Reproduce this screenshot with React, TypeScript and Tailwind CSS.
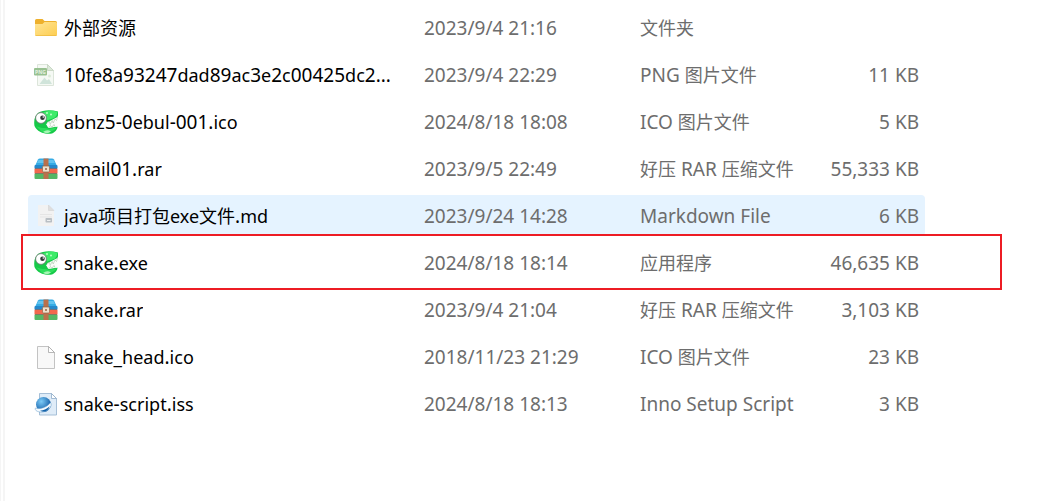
import React from 'react';

type FileKind = 'folder' | 'png' | 'snake' | 'rar' | 'markdown' | 'blank' | 'script';

interface FileEntry {
    name: string;
    modified: string;
    type: string;
    size: string;
    kind: FileKind;
    hovered?: boolean;
    marked?: boolean;
}

const FILES: FileEntry[] = [
    { name: '外部资源', modified: '2023/9/4 21:16', type: '文件夹', size: '', kind: 'folder' },
    { name: '10fe8a93247dad89ac3e2c00425dc2...', modified: '2023/9/4 22:29', type: 'PNG 图片文件', size: '11 KB', kind: 'png' },
    { name: 'abnz5-0ebul-001.ico', modified: '2024/8/18 18:08', type: 'ICO 图片文件', size: '5 KB', kind: 'snake' },
    { name: 'email01.rar', modified: '2023/9/5 22:49', type: '好压 RAR 压缩文件', size: '55,333 KB', kind: 'rar' },
    { name: 'java项目打包exe文件.md', modified: '2023/9/24 14:28', type: 'Markdown File', size: '6 KB', kind: 'markdown', hovered: true },
    { name: 'snake.exe', modified: '2024/8/18 18:14', type: '应用程序', size: '46,635 KB', kind: 'snake', marked: true },
    { name: 'snake.rar', modified: '2023/9/4 21:04', type: '好压 RAR 压缩文件', size: '3,103 KB', kind: 'rar' },
    { name: 'snake_head.ico', modified: '2018/11/23 21:29', type: 'ICO 图片文件', size: '23 KB', kind: 'blank' },
    { name: 'snake-script.iss', modified: '2024/8/18 18:13', type: 'Inno Setup Script', size: '3 KB', kind: 'script' },
];

const FolderIcon = () => (
    <>
        <defs>
            <linearGradient id="folder" x1="0" y1="0" x2="1" y2="1">
                <stop offset="0" stopColor="#ffe596" />
                <stop offset="1" stopColor="#fdcd50" />
            </linearGradient>
        </defs>
        <path d="M1 4.500Q1 3 2.500 3H8.500L10.500 5H21.500Q23 5 23 6.500V9H1Z" fill="#eeb02c" />
        <path d="M1 8H8.500L10.500 6H21.500Q23 6 23 7.500V18.500Q23 20 21.500 20H2.500Q1 20 1 18.500Z" fill="url(#folder)" />
        <path d="M1.500 19.500H22.500" stroke="#ecb93d" strokeWidth=".7" />
    </>
);

const PngIcon = () => (
    <>
        <path d="M3.500 1.500H13.500L19.500 7.500V22.500H3.500Z" fill="#f5f9f4" stroke="#dce5da" />
        <path d="M13.500 1.500V7.500H19.500Z" fill="#dce9d9" stroke="#c3d3bf" strokeWidth=".8" />
        <path d="M5.500 21L10.500 14.500L13 17.500L15 16L18 21Z" fill="#d0e4da" />
        <circle cx="15.500" cy="13" r="1.500" fill="#dcebd9" />
        <rect x="0" y="5" width="13" height="7.500" rx="1" fill="#98c191" />
        <text x="6.500" y="10.700" textAnchor="middle" fontSize="5" fontWeight="700" fill="#e5f2e1">PNG</text>
    </>
);

const SnakeIcon = () => (
    <>
        <path d="M4 3C9-.5 17-.5 24 1.500C24.500 5 24 7 22 9L12 14L14 17.500L23.500 16.500C23.500 20 21 22 18 23.500C11 24.700 3 22 .5 16C-.5 10 1 6 4 3Z" fill="#16c948" />
        <path d="M9 2.500C14 .2 19 .2 23.500 2C23 5 22 7 20 8L13 10.500Z" fill="#3deb69" />
        <path d="M2 16C6 18.500 12 17.500 15 19L22.500 17.500C20 21.500 13 24 7.500 21.500Z" fill="#2dde5b" />
        <path d="M13 12.500L23.500 7V16.500L14.500 18Z" fill="#fbfdfa" />
        <path d="M13 12.500L15.500 11.500L16.200 14.500L18.200 10.500L19.200 13L21 9L22.500 10.500L23.500 7M15 17.500L16.500 15.500L18 17.200L20 14.500L21 16.500" fill="none" stroke="#a7c4a7" strokeWidth=".6" />
        <path d="M9 22Q13 19 17 21.500Q13 24.500 9 22Z" fill="#a5f5b4" />
        <circle cx="7" cy="8" r="5.400" fill="#fff" stroke="#65756b" strokeWidth=".8" />
        <circle cx="8.500" cy="7.800" r="2.300" fill="#303a38" />
        <circle cx="9.300" cy="7" r=".8" fill="#fff" />
        <circle cx="13" cy="3" r="1" fill="#b9ffc5" />
        <circle cx="17" cy="4.500" r="1" fill="#b9ffc5" />
    </>
);

const RarIcon = () => (
    <>
        <path d="M1 9L4 2.500Q4.500 1.500 6 1.500H18Q19.500 1.500 20 2.500L23 9Z" fill="#35abe5" />
        <path d="M3 6L4.500 3H19.500L21 6Z" fill="#62c4f0" />
        <rect x="0.500" y="8" width="23" height="4" rx="1" fill="#2588ca" />
        <rect x="0.500" y="11.500" width="23" height="5.500" rx="1" fill="#f2684d" />
        <rect x="0.500" y="16.500" width="23" height="5.500" rx="1" fill="#54b765" />
        <path d="M1 16.500H23M1 11.500H23" stroke="#536b70" strokeWidth=".5" />
        <rect x="9.500" y="1.500" width="5" height="20.500" fill="#b9714c" />
        <rect x="8.500" y="9" width="7" height="6" rx="1" fill="#eee0cd" stroke="#91684b" strokeWidth=".7" />
        <path d="M11 11H13V13H11Z" fill="#ac8067" />
    </>
);

const MarkdownIcon = () => (
    <>
        <path d="M4 1H14.500L20 6.500V22H4Z" fill="#f2f2f2" />
        <path d="M14.500 1V6.500H20Z" fill="#dedede" stroke="#cfcfcf" strokeWidth=".5" />
        <path d="M6 10.500H18M6 13H18" stroke="#e5e5e5" />
        <rect x="11.500" y="14" width="6.500" height="4.500" rx=".7" fill="#b9bfc4" />
        <path d="M13 16.500H16.500" stroke="#eef0f1" />
    </>
);

const BlankIcon = () => (
    <>
        <path d="M3.500 1.500H14.500L20.500 7.500V23.500H3.500Z" fill="#f8f8f8" stroke="#b5b5b5" strokeWidth=".8" />
        <path d="M14.500 1.500V7.500H20.500Z" fill="#fff" stroke="#a5a5a5" strokeWidth=".8" />
    </>
);

const ScriptIcon = () => (
    <>
        <defs>
            <radialGradient id="globe" cx=".35" cy=".3" r=".75">
                <stop offset="0" stopColor="#7ccbf7" />
                <stop offset="1" stopColor="#07519e" />
            </radialGradient>
        </defs>
        <path d="M5.500 1.500H17.500L22.500 6.500V23H5.500Z" fill="#dfecf8" stroke="#9db9d3" strokeWidth=".9" />
        <path d="M17.500 1.500V6.500H22.500Z" fill="#fff" stroke="#8facc8" strokeWidth=".8" />
        <circle cx="9.500" cy="12.500" r="7.500" fill="url(#globe)" />
        <path d="M1.500 16C5 17.500 12.500 16 16.500 10.500C19.500 14 13 21 6 20C2.500 19.500 .5 18 1.500 16Z" fill="#f6fbff" stroke="#5d97c7" strokeWidth=".5" />
        <path d="M6 18.500C9.500 18.500 14 16.500 15.500 14C15 18 11.500 20 8 19.500Z" fill="#1263aa" />
    </>
);

const ICONS: Record<FileKind, React.FC> = {
    folder: FolderIcon,
    png: PngIcon,
    snake: SnakeIcon,
    rar: RarIcon,
    markdown: MarkdownIcon,
    blank: BlankIcon,
    script: ScriptIcon,
};

const CHINESE = /([\u4e00-\u9fff]+)/;
const CHINESE_OR_LOWERCASE = /([\u4e00-\u9fffa-z]+)/;

// Runs that match the pattern are set one step smaller than the text around them
const MixedText: React.FC<{ text: string; small: RegExp }> = ({ text, small }) => (
    <>
        {text.split(small).map((part, i) => (
            i % 2 === 1 ? <span key={i} className="text-[18px]">{part}</span> : part
        ))}
    </>
);

const FileRow: React.FC<{ file: FileEntry }> = ({ file }) => {
    const Icon = ICONS[file.kind];

    return (
        <tr className={`relative h-[41px] ${file.hovered ? 'bg-[#e5f3ff]' : ''}`}>
            <td className="rounded-l-sm pl-[6px] text-black">
                <div className="flex items-center gap-[6px]">
                    <svg viewBox="0 0 24 24" className="h-6 w-6 shrink-0" aria-hidden="true"><Icon /></svg>
                    <span className="truncate"><MixedText text={file.name} small={CHINESE_OR_LOWERCASE} /></span>
                </div>
                {file.marked && (
                    <div className="pointer-events-none absolute -top-2 -right-[77px] -bottom-[7px] -left-[7px] border-2 border-[#ed1c24]" />
                )}
            </td>
            <td>{file.modified}</td>
            <td><MixedText text={file.type} small={CHINESE} /></td>
            <td className="rounded-r-sm pr-[6px] text-right">{file.size}</td>
        </tr>
    );
};

const App: React.FC = () => {
    return (
        <div className="flex min-h-screen bg-white font-['Noto_Sans','Noto_Sans_CJK_SC',sans-serif] text-[19px] leading-6 text-[#6d6d6d]">
            <div className="w-[5px] border-r-2 border-l border-[#f5f5f5]" />
            <main className="min-w-0 flex-1 pt-px pr-28 pl-[23px]">
                <table className="w-full table-fixed border-separate border-spacing-x-0 border-spacing-y-[6px] whitespace-nowrap">
                    <colgroup>
                        <col />
                        <col className="w-[216px]" />
                        <col className="w-[170px]" />
                        <col className="w-[115px]" />
                    </colgroup>
                    <tbody>
                        {FILES.map(file => <FileRow key={file.name} file={file} />)}
                    </tbody>
                </table>
            </main>
        </div>
    );
};

export default App;
